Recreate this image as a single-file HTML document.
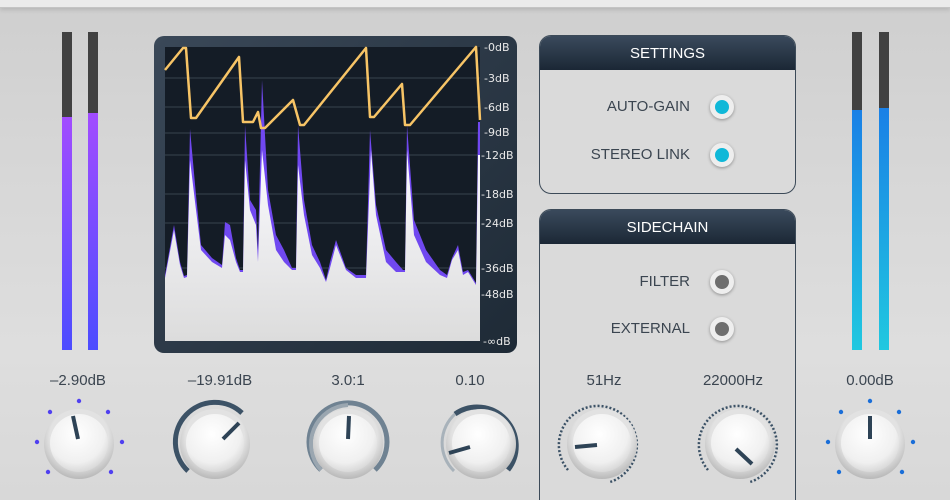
<!DOCTYPE html>
<html style="height:500px;overflow:hidden"><head><style>
html,body{margin:0;width:950px;height:500px;overflow:hidden}
body{background:linear-gradient(#cfcfcf 0,#d6d6d6 30%,#dedede 70%,#d8d8d8 100%);font-family:"Liberation Sans",sans-serif;position:relative}
.top{position:absolute;left:0;top:0;width:950px;height:7px;background:#ebebeb;border-bottom:1px solid #c4c4c4;box-shadow:0 2px 4px rgba(0,0,0,.12)}
.m{position:absolute;width:10px;top:32px;height:318px;background:#414141}
.lbl{position:absolute;font-size:15px;color:#3b4550;text-align:center;width:120px}
.panel{position:absolute;left:539px;width:255px;border:1px solid #3c4a58;border-radius:12px;background:#dadada;overflow:hidden}
.hd{height:34px;background:linear-gradient(#3a4a5c,#1b2735);color:#fff;font-size:15px;text-align:center;line-height:36px}
.row{position:absolute;font-size:15px;color:#3b4550;text-align:right;width:150px;left:0}
.led{position:absolute;left:170px;width:14px;height:14px;border-radius:50%;border:5px solid #eee;box-shadow:0 1px 3px rgba(0,0,0,.35)}
.dl{position:absolute;left:484px;font-size:11px;color:#e8e8e8;font-family:"DejaVu Sans",sans-serif}
</style></head><body>
<div class="top"></div>
<div class="m" style="left:62px"></div><div class="m" style="left:62px;top:117px;height:233px;background:linear-gradient(#a24cff,#4c4cff)"></div>
<div class="m" style="left:88px"></div><div class="m" style="left:88px;top:113px;height:237px;background:linear-gradient(#a24cff,#4c4cff)"></div>
<div class="m" style="left:852px"></div><div class="m" style="left:852px;top:110px;height:240px;background:linear-gradient(#1a80e6,#20c8e0)"></div>
<div class="m" style="left:879px"></div><div class="m" style="left:879px;top:108px;height:242px;background:linear-gradient(#1a80e6,#20c8e0)"></div>

<div style="position:absolute;left:154px;top:36px;width:363px;height:317px;border-radius:10px;background:linear-gradient(135deg,#3a4858,#1e2a36)"></div>
<svg style="position:absolute;left:0;top:0" width="950" height="500">
<rect x="165" y="47" width="315" height="294" fill="#141c26"/>
<g stroke="#39434f" stroke-width="1">
<line x1="165" y1="78" x2="480" y2="78"/><line x1="165" y1="107" x2="480" y2="107"/><line x1="165" y1="133" x2="480" y2="133"/><line x1="165" y1="155" x2="480" y2="155"/><line x1="165" y1="194" x2="480" y2="194"/><line x1="165" y1="223" x2="480" y2="223"/><line x1="165" y1="268" x2="480" y2="268"/></g>
<defs><linearGradient id="wg" x1="0" y1="0" x2="0" y2="1"><stop offset="0" stop-color="#fbfbff"/><stop offset="1" stop-color="#dcdcdc"/></linearGradient></defs>
<path fill="#7048f0" d="M165,275 L174,225 L180,262 L184,276 L187,275 L190,129 L196,195 L201,245 L212,258 L222,265 L225,222 L230,225 L236,258 L240,270 L243,270 L245,125 L250,200 L256,210 L258,250 L262,80 L268,190 L276,235 L284,250 L292,268 L296,268 L298,125 L304,200 L312,245 L320,262 L326,280 L330,262 L336,240 L346,268 L356,275 L366,275 L370,130 L376,205 L386,250 L396,262 L403,270 L405,270 L407,125 L414,220 L426,250 L440,270 L447,275 L452,258 L458,245 L463,272 L468,270 L476,283 L478,122 L480,122 L480,341 L165,341Z"/>
<path fill="url(#wg)" d="M165,278 L174,230 L180,265 L184,278 L187,277 L190,160 L196,210 L201,250 L212,262 L222,268 L225,235 L230,240 L236,262 L240,272 L243,272 L245,160 L250,210 L256,225 L258,262 L262,150 L268,205 L276,250 L284,262 L292,270 L296,270 L298,165 L304,215 L312,255 L320,268 L326,282 L330,268 L336,245 L346,270 L356,278 L366,278 L371,150 L376,215 L386,262 L396,272 L403,272 L405,272 L407,150 L414,235 L426,262 L440,275 L447,278 L452,260 L458,250 L463,275 L468,272 L476,285 L478,155 L480,155 L480,341 L165,341Z"/>
<path fill="none" stroke="#f7c466" stroke-width="2.5" stroke-linejoin="round" d="M165,70 L183,48 L186,48 L191,118 L196,118 L239,57 L243,122 L253,122 L258,112 L261,128 L265,128 L293,100 L300,125 L304,125 L366,48 L370,117 L374,117 L402,84 L405,125 L410,125 L476,47 L480,120"/>
</svg>
<div class="dl" style="top:41px">-0dB</div><div class="dl" style="top:72px">-3dB</div><div class="dl" style="top:101px">-6dB</div><div class="dl" style="top:126px">-9dB</div><div class="dl" style="top:149px;left:481px">-12dB</div><div class="dl" style="top:188px;left:481px">-18dB</div><div class="dl" style="top:217px;left:481px">-24dB</div><div class="dl" style="top:262px;left:481px">-36dB</div><div class="dl" style="top:288px;left:481px">-48dB</div><div class="dl" style="top:335px;left:483px">-∞dB</div>

<div class="panel" style="top:35px;height:157px"><div class="hd">SETTINGS</div>
<div class="row" style="top:62px">AUTO-GAIN</div><div class="led" style="top:59px;background:#10b8d8"></div>
<div class="row" style="top:110px">STEREO LINK</div><div class="led" style="top:107px;background:#10b8d8"></div></div>
<div class="panel" style="top:209px;height:310px"><div class="hd">SIDECHAIN</div>
<div class="row" style="top:63px">FILTER</div><div class="led" style="top:60px;background:#6e6e6e"></div>
<div class="row" style="top:110px">EXTERNAL</div><div class="led" style="top:107px;background:#6e6e6e"></div></div>

<div class="lbl" style="left:18px;top:372px">–2.90dB</div>
<div class="lbl" style="left:160px;top:372px">–19.91dB</div>
<div class="lbl" style="left:288px;top:372px">3.0:1</div>
<div class="lbl" style="left:410px;top:372px">0.10</div>
<div class="lbl" style="left:544px;top:372px">51Hz</div>
<div class="lbl" style="left:673px;top:372px">22000Hz</div>
<div class="lbl" style="left:810px;top:372px">0.00dB</div>

<svg style="position:absolute;left:0;top:0" width="950" height="500">
<defs><radialGradient id="kf" cx="0.45" cy="0.35" r="0.7"><stop offset="0" stop-color="#ffffff"/><stop offset="0.7" stop-color="#f0f0f0"/><stop offset="1" stop-color="#d2d2d2"/></radialGradient>
<radialGradient id="kr" cx="0.5" cy="0.4" r="0.6"><stop offset="0.7" stop-color="#e2e2e2"/><stop offset="1" stop-color="#b8b8b8"/></radialGradient></defs>
<g fill="#5040f0"><circle cx="79" cy="401" r="2.2"/><circle cx="50" cy="412" r="2.2"/><circle cx="108" cy="412" r="2.2"/><circle cx="37" cy="442" r="2.2"/><circle cx="122" cy="442" r="2.2"/><circle cx="48" cy="472" r="2.2"/><circle cx="111" cy="472" r="2.2"/></g>
<g fill="#1a6ed8"><circle cx="870" cy="401" r="2.2"/><circle cx="841" cy="412" r="2.2"/><circle cx="899" cy="412" r="2.2"/><circle cx="828" cy="442" r="2.2"/><circle cx="913" cy="442" r="2.2"/><circle cx="839" cy="472" r="2.2"/><circle cx="902" cy="472" r="2.2"/></g>
<g fill="none" stroke="#3c5266" stroke-width="5">
<path d="M188,471 A39,39 0 0 1 242,413"/>
<path d="M321,470 A39,39 0 1 1 375,470" stroke="#6f8292"/>
<path d="M455,414 A39,39 0 0 1 508,470" stroke="#3c5266"/>
<path d="M455,414 A39,39 0 0 0 454,471" stroke="#a8b2ba" stroke-width="3"/>
<path d="M321,470 A39,39 0 0 1 348,405" stroke="#9aa6b0" stroke-width="4"/>
</g>
<g fill="none" stroke="#3c5266" stroke-width="2.5">
<path d="M568,470 A39,39 0 1 1 610,482" stroke-dasharray="2 2"/>
<path d="M708,470 A39,39 0 1 1 750,482" stroke-dasharray="2 2"/>
</g>
<g>
<circle cx="79" cy="444" r="35" fill="url(#kr)"/><circle cx="79" cy="443" r="29" fill="url(#kf)"/>
<circle cx="215" cy="444" r="35" fill="url(#kr)"/><circle cx="215" cy="443" r="29" fill="url(#kf)"/>
<circle cx="348" cy="444" r="35" fill="url(#kr)"/><circle cx="348" cy="443" r="29" fill="url(#kf)"/>
<circle cx="481" cy="444" r="35" fill="url(#kr)"/><circle cx="481" cy="443" r="29" fill="url(#kf)"/>
<circle cx="602" cy="444" r="35" fill="url(#kr)"/><circle cx="602" cy="443" r="29" fill="url(#kf)"/>
<circle cx="740" cy="444" r="35" fill="url(#kr)"/><circle cx="740" cy="443" r="29" fill="url(#kf)"/>
<circle cx="870" cy="444" r="35" fill="url(#kr)"/><circle cx="870" cy="443" r="29" fill="url(#kf)"/>
</g>
<g stroke="#2e4356" stroke-width="4" stroke-linecap="butt">
<line x1="73" y1="416" x2="78" y2="439"/>
<line x1="223" y1="439" x2="239" y2="423"/>
<line x1="349" y1="416" x2="348" y2="439"/>
<line x1="449" y1="453" x2="470" y2="447"/>
<line x1="575" y1="447" x2="597" y2="445"/>
<line x1="736" y1="449" x2="752" y2="464"/>
<line x1="870" y1="416" x2="870" y2="439"/>
</g>
</svg>
</body></html>
